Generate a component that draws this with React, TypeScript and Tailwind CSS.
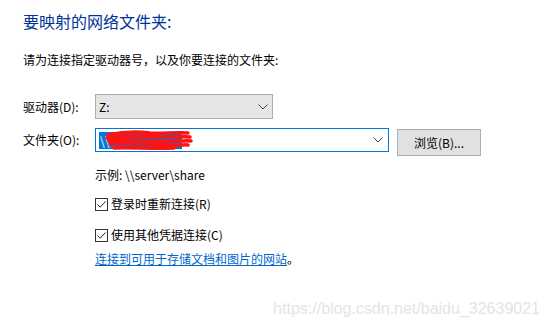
import React from "react";

const font = { fontFamily: '"Noto Sans CJK SC", "Noto Sans", sans-serif' };

// 细箭头（下拉框）
function Chevron() {
  return (
    <svg width="10" height="6" viewBox="0 0 10 6" className="shrink-0">
      <path d="M0.5 0.5 L5 5 L9.5 0.5" fill="none" stroke="#444" strokeWidth="1" />
    </svg>
  );
}

function CheckBox({ label }: { label: string }) {
  return (
    <div className="flex h-4 items-center gap-[3px]">
      <span className="flex h-[13px] w-[13px] items-center justify-center border border-[#333] bg-white">
        <svg width="11" height="11" viewBox="0 0 11 11">
          <path d="M1.5 5.5 L4.2 8.2 L9.5 2.5" fill="none" stroke="#222" strokeWidth="1" />
        </svg>
      </span>
      <span className="text-[12px] leading-4 text-black">{label}</span>
    </div>
  );
}

export default function App() {
  return (
    <div className="h-[329px] w-[550px] overflow-hidden bg-white" style={font}>
      <div className="flex flex-col pl-[23px] pt-[10px]">
        {/* 标题 */}
        <h1 className="text-[16px] leading-[22px] text-[#003399]">要映射的网络文件夹:</h1>
        <p className="mt-[20px] text-[12px] leading-4 text-black">
          请为连接指定驱动器号，以及你要连接的文件夹:
        </p>

        {/* 驱动器 */}
        <div className="mt-[26px] flex items-center">
          <span className="w-[72px] text-[12px] leading-4 text-black">驱动器(D):</span>
          <div className="flex h-[25px] w-[178px] items-center justify-between border border-[#adadad] bg-[#e5e5e5] pl-[3px] pr-[4px]">
            <span className="text-[12px] leading-4 text-black">Z:</span>
            <Chevron />
          </div>
        </div>

        {/* 文件夹 */}
        <div className="mt-[9px] flex items-start">
          <span className="w-[72px] text-[12px] leading-[24px] text-black">文件夹(O):</span>
          <div className="relative flex h-[24px] w-[294px] items-center justify-between border border-[#0078d7] bg-white pl-[3px] pr-[5px]">
            <span className="h-[17px] w-[83px] bg-[#0078d7] pl-[1px] text-[12px] leading-[17px] text-white">\\</span>
            <Chevron />
            {/* 红色涂抹 */}
            <svg
              className="absolute left-[8px] top-[0px]"
              width="90"
              height="24"
              viewBox="0 0 90 24"
            >
              <path
                d="M4 6 C18 3 30 2 46 4 C58 5 70 3 84 4 M3 9 C20 7 38 6 56 8 C68 9 78 7 86 8 M5 12 C22 10 42 11 62 13 C72 13 80 11 87 12 M6 15 C25 14 45 15 66 17 C74 17 80 15 84 16 M10 19 C28 18 46 20 70 19"
                fill="none"
                stroke="#ff1212"
                strokeWidth="3.4"
                strokeLinecap="round"
              />
            </svg>
          </div>
          <button className="ml-[8px] mt-[1px] h-[27px] w-[84px] border border-[#adadad] bg-[#e1e1e1] text-[12px] leading-4 text-black">
            浏览(B)...
          </button>
        </div>

        {/* 下方选项 */}
        <div className="ml-[72px] flex flex-col">
          <p className="mt-[11px] text-[12px] leading-4 text-black">示例: \\server\share</p>
          <div className="mt-[13px]">
            <CheckBox label="登录时重新连接(R)" />
          </div>
          <div className="mt-[15px]">
            <CheckBox label="使用其他凭据连接(C)" />
          </div>
          <div className="mt-[8px] flex text-[12px] leading-4">
            <a className="text-[#0066cc] underline" href="#">
              连接到可用于存储文档和图片的网站
            </a>
            <span className="text-black">。</span>
          </div>
        </div>

        {/* 水印 */}
        <div
          className="mt-[33px] self-end pr-[10px] text-[16px] leading-[18px] text-[#e4e4e4]"
          style={{ fontFamily: '"Liberation Sans", Arial, sans-serif' }}
        >
          https://blog.csdn.net/baidu_32639021
        </div>
      </div>
    </div>
  );
}
